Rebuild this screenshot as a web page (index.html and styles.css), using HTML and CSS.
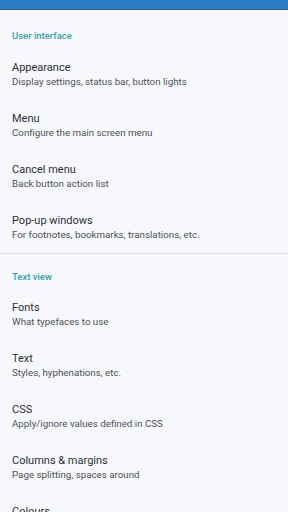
FILE: index.html
```html
<!DOCTYPE html>
<html lang="en">
<head>
    <meta charset="UTF-8">
    <meta name="viewport" content="width=device-width, initial-scale=1.0">
    <title>Settings</title>
    <link rel="stylesheet" href="styles.css">
</head>
<body>
    <div class="top-bar"></div>

    <div class="section">
        <div class="section-title">User interface</div>
        <div class="item">
            <div class="item-title">Appearance</div>
            <div class="item-sub">Display settings, status bar, button lights</div>
        </div>
        <div class="item">
            <div class="item-title">Menu</div>
            <div class="item-sub">Configure the main screen menu</div>
        </div>
        <div class="item">
            <div class="item-title">Cancel menu</div>
            <div class="item-sub">Back button action list</div>
        </div>
        <div class="item">
            <div class="item-title">Pop-up windows</div>
            <div class="item-sub">For footnotes, bookmarks, translations, etc.</div>
        </div>
    </div>

    <div class="section section-border">
        <div class="section-title">Text view</div>
        <div class="item">
            <div class="item-title">Fonts</div>
            <div class="item-sub">What typefaces to use</div>
        </div>
        <div class="item">
            <div class="item-title">Text</div>
            <div class="item-sub">Styles, hyphenations, etc.</div>
        </div>
        <div class="item">
            <div class="item-title">CSS</div>
            <div class="item-sub">Apply/ignore values defined in CSS</div>
        </div>
        <div class="item">
            <div class="item-title">Columns &amp; margins</div>
            <div class="item-sub">Page splitting, spaces around</div>
        </div>
        <div class="item">
            <div class="item-title">Colours</div>
        </div>
    </div>
</body>
</html>
```

FILE: styles.css
```css
body {
    font-family: Roboto, "Noto Sans", sans-serif;
    margin: 0;
    padding: 0;
    background-color: #f6f8fc;
    height: 512px;
    overflow: hidden;
}
.top-bar {
    height: 9px;
    background-color: #2a7cc5;
    border-bottom: 1px solid #2468a8;
}
.section-border {
    border-top: 1px solid #e2e4e8;
}
.section-title {
    padding: 19px 12px 6px;
    font-size: 9.5px;
    line-height: 14px;
    font-weight: 500;
    color: #34a3a8;
}
.section-border .section-title {
    padding-top: 16px;
    padding-bottom: 5px;
}
.item {
    padding: 11.5px 12px;
}
.item-title {
    font-size: 11px;
    line-height: 14px;
    color: #2e3034;
}
.item-sub {
    font-size: 9.75px;
    line-height: 14px;
    color: #4e5054;
}
```
